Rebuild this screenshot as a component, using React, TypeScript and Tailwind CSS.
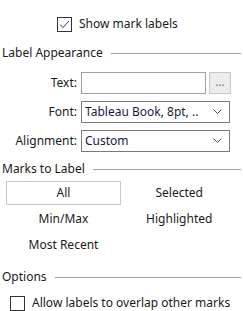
function Chevron() {
  return (
    <svg width="9" height="6" viewBox="0 0 9 6" className="shrink-0">
      <path d="M0.5 0.5 L4.5 4.5 L8.5 0.5" fill="none" stroke="#555" strokeWidth="1" />
    </svg>
  );
}

function SectionHeader({ title }: { title: string }) {
  return (
    <div className="flex items-center gap-2 pl-[2px] pr-[2px]">
      <span className="whitespace-nowrap leading-[16px]">{title}</span>
      <div className="h-px flex-1 bg-[#a0a0a0]" />
    </div>
  );
}

function Select({ value }: { value: string }) {
  return (
    <div className="flex h-[22px] w-[149px] items-center justify-between border border-[#7a7a7a] bg-white pl-[3px] pr-[7px]">
      <span className="whitespace-nowrap leading-[16px] text-[#1a1a40]">{value}</span>
      <Chevron />
    </div>
  );
}

function Row({ label, children }: { label: string; children: React.ReactNode }) {
  return (
    <div className="flex items-center">
      <span className="w-[81px] pr-[4px] text-right leading-[16px]">{label}</span>
      {children}
    </div>
  );
}

export default function App() {
  return (
    <div
      className="h-[311px] w-[243px] overflow-hidden bg-white text-[12px] leading-none text-[#1a1a1a]"
      style={{ fontFamily: '"Noto Sans", "Open Sans", sans-serif' }}
    >
      <div className="flex items-center pl-[57px] pt-[16px]">
        <div className="flex h-[15px] w-[15px] items-center justify-center border border-[#333]">
          <svg width="11" height="9" viewBox="0 0 11 9">
            <path d="M1 4.5 L4 7.5 L10 1" fill="none" stroke="#333" strokeWidth="1" />
          </svg>
        </div>
        <span className="ml-[7px] leading-[16px]">Show mark labels</span>
      </div>

      <div className="mt-[13px]">
        <SectionHeader title="Label Appearance" />
      </div>

      <div className="mt-[11px] flex flex-col gap-[7px]">
        <Row label="Text:">
          <div className="h-[22px] w-[125px] border border-[#a0a0a0] bg-white" />
          <div className="ml-[3px] flex h-[22px] w-[22px] items-end justify-center border border-[#c8c8c8] bg-[#ececec] pb-[5px] text-[#777]">
            ...
          </div>
        </Row>
        <Row label="Font:">
          <Select value="Tableau Book, 8pt, .." />
        </Row>
        <Row label="Alignment:">
          <Select value="Custom" />
        </Row>
      </div>

      <div className="mt-[9px]">
        <SectionHeader title="Marks to Label" />
      </div>

      <div className="mt-[4px] grid grid-cols-2 gap-y-[2px] pl-[6px] pr-[6px]">
        <div className="flex h-[24px] w-[115px] items-center justify-center border border-[#c8c8c8]">All</div>
        <div className="flex h-[24px] items-center justify-center">Selected</div>
        <div className="flex h-[24px] w-[115px] items-center justify-center">Min/Max</div>
        <div className="flex h-[24px] items-center justify-center">Highlighted</div>
        <div className="flex h-[24px] w-[115px] items-center justify-center">Most Recent</div>
      </div>

      <div className="mt-[12px]">
        <SectionHeader title="Options" />
      </div>

      <div className="mt-[10px] flex items-center pl-[10px]">
        <div className="h-[15px] w-[15px] border border-[#333]" />
        <span className="ml-[7px] leading-[16px]">Allow labels to overlap other marks</span>
      </div>
    </div>
  );
}
